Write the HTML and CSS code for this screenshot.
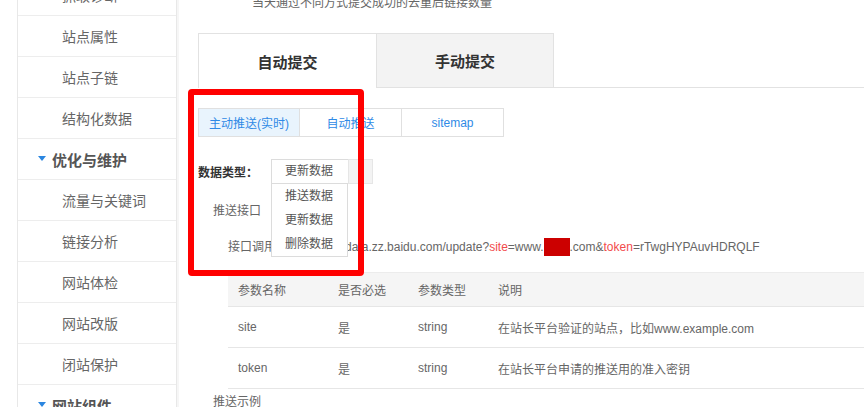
FILE: index.html
```html
<!DOCTYPE html>
<html lang="zh-CN">
<head>
<meta charset="utf-8">
<title>链接提交</title>
<link rel="stylesheet" href="styles.css">
</head>
<body>
<div class="page">
  <aside class="sidebar">
    <div class="item first">抓取诊断</div>
    <div class="item">站点属性</div>
    <div class="item">站点子链</div>
    <div class="item">结构化数据</div>
    <div class="group"><span class="caret"></span>优化与维护</div>
    <div class="item">流量与关键词</div>
    <div class="item">链接分析</div>
    <div class="item">网站体检</div>
    <div class="item">网站改版</div>
    <div class="item">闭站保护</div>
    <div class="group"><span class="caret"></span>网站组件</div>
  </aside>
  <main class="main">
    <div class="caption">当天通过不同方式提交成功的去重后链接数量</div>
    <div class="tabs">
      <div class="tab active">自动提交</div>
      <div class="tab">手动提交</div>
      <div class="tab-rest"></div>
    </div>
    <div class="subtabs">
      <div class="subtab active">主动推送(实时)</div>
      <div class="subtab">自动推送</div>
      <div class="subtab">sitemap</div>
    </div>
    <div class="field">
      <span class="field-label">数据类型：</span>
      <div class="select">
        <div class="select-value">更新数据</div>
        <div class="select-arrow"><span class="tri"></span></div>
        <ul class="dropdown">
          <li>推送数据</li>
          <li>更新数据</li>
          <li>删除数据</li>
        </ul>
      </div>
    </div>
    <div class="line l1">推送接口</div>
    <div class="line l2"><span class="url-label">接口调用地址：</span>http://data.zz.baidu.com/update?<span class="kw">site</span>=www.<span class="redact"></span>.com&amp;<span class="kw">token</span>=rTwgHYPAuvHDRQLF</div>
    <table class="params">
      <thead>
        <tr><th class="c1">参数名称</th><th class="c2">是否必选</th><th class="c3">参数类型</th><th>说明</th></tr>
      </thead>
      <tbody>
        <tr><td>site</td><td>是</td><td>string</td><td>在站长平台验证的站点，比如www.example.com</td></tr>
        <tr><td>token</td><td>是</td><td>string</td><td>在站长平台申请的推送用的准入密钥</td></tr>
      </tbody>
    </table>
    <div class="line l1 example">推送示例</div>
    <div class="annot"></div>
  </main>
</div>
</body>
</html>
```
FILE: styles.css
```css
* { box-sizing: border-box; }
html, body {
  margin: 0;
  padding: 0;
  background: #fff;
}
body {
  font-family: "Liberation Sans", "Noto Sans CJK SC", sans-serif;
  font-size: 12px;
  color: #666;
  width: 864px;
  height: 407px;
  overflow: hidden;
}
.page {
  display: flex;
  align-items: flex-start;
  height: 407px;
}

/* sidebar */
.sidebar {
  margin-left: 17px;
  width: 160px;
  flex: none;
  border-left: 1px solid #e8e8e8;
  border-right: 1px solid #e8e8e8;
  box-shadow: 2px 0 0 #f6f6f6;
  margin-top: -25px;
}
.item, .group {
  height: 41px;
  border-bottom: 1px solid #ededed;
  display: flex;
  align-items: center;
  font-size: 14px;
  color: #666;
}
.item { padding-left: 44px; }
.group {
  padding-left: 20px;
  font-size: 15px;
  font-weight: bold;
  color: #555;
}
.caret {
  width: 0;
  height: 0;
  border-left: 4px solid transparent;
  border-right: 4px solid transparent;
  border-top: 5px solid #2b86e0;
  margin-right: 6px;
  margin-top: -2px;
}

/* main */
.main {
  position: relative;
  flex: 1;
  padding-left: 21px;
}
.caption {
  height: 33px;
  line-height: 6px;
  padding-left: 54px;
  font-size: 12px;
  color: #666;
}
.tabs {
  display: flex;
  height: 55px;
}
.tab {
  width: 178px;
  height: 55px;
  display: flex;
  align-items: center;
  justify-content: center;
  font-size: 15px;
  font-weight: bold;
  color: #333;
  background: #f3f3f3;
  border-top: 1px solid #e2e2e2;
  border-left: 1px solid #e2e2e2;
  border-bottom: 1px solid #e2e2e2;
}
.tab + .tab {
  width: 178px;
  border-right: 1px solid #e2e2e2;
}
.tab.active {
  background: #fff;
  border-bottom: none;
  padding-top: 1px;
}
.tab-rest {
  flex: 1;
  border-bottom: 1px solid #e2e2e2;
}

.subtabs {
  display: flex;
  margin-top: 20px;
}
.subtab {
  width: 102px;
  height: 29px;
  border: 1px solid #e0e0e0;
  display: flex;
  align-items: center;
  justify-content: center;
  color: #2f8ae6;
  font-size: 12px;
}
.subtab + .subtab { margin-left: -1px; width: 103px; }
.subtab.active { background: #e9f4fd; }

.field {
  display: flex;
  align-items: center;
  margin-top: 22px;
  height: 25px;
}
.field-label {
  width: 73px;
  font-weight: bold;
  color: #333;
}
.select {
  position: relative;
  display: flex;
  height: 25px;
}
.select-value {
  width: 77px;
  height: 25px;
  border: 1px solid #dcdcdc;
  border-right: none;
  padding-left: 13px;
  line-height: 23px;
  color: #555;
}
.select-arrow {
  width: 25px;
  height: 25px;
  background: #f3f3f3;
  border: 1px solid #e6e6e6;
  position: relative;
}
.tri {
  position: absolute;
  left: 9px;
  top: 11px;
  width: 0;
  height: 0;
  border-left: 3px solid transparent;
  border-right: 3px solid transparent;
  border-top: 4px solid #bdbdbd;
}
.dropdown {
  position: absolute;
  left: 0;
  top: 25px;
  width: 77px;
  margin: 0;
  padding: 0;
  list-style: none;
  background: #fff;
  border: 1px solid #dcdcdc;
  border-top: none;
  z-index: 2;
}
.dropdown li {
  height: 24px;
  line-height: 24px;
  padding-left: 13px;
  color: #555;
}

.line {
  height: 24px;
  line-height: 24px;
  white-space: nowrap;
}
.l1 { margin-top: 15px; padding-left: 15px; }
.l2 { margin-top: 12px; padding-left: 30px; }
.url-label { margin-right: 3px; }
.kw { color: #f24b4b; }
.redact {
  display: inline-block;
  width: 26px;
  height: 18px;
  background: #cc0000;
  vertical-align: -5px;
}

.params {
  margin-top: 13px;
  margin-left: 30px;
  width: 636px;
  border-collapse: collapse;
  border-top: 1px solid #ececec;
}
.params th, .params td {
  text-align: left;
  font-weight: normal;
  padding: 0 0 0 10px;
  color: #666;
  font-size: 12px;
  white-space: nowrap;
}
.params th {
  height: 34px;
  background: #f5f5f5;
  border-bottom: 1px solid #e6e6e6;
}
.params td {
  height: 41px;
  border-bottom: 1px solid #e6e6e6;
}
.c1 { width: 100px; }
.c2 { width: 80px; }
.c3 { width: 80px; }
.example { margin-top: 1px; }

/* annotation overlay */
.annot {
  position: absolute;
  left: 11px;
  top: 89px;
  width: 176px;
  height: 187px;
  border: 6px solid #ff0000;
  border-radius: 4px;
  z-index: 3;
}
```
